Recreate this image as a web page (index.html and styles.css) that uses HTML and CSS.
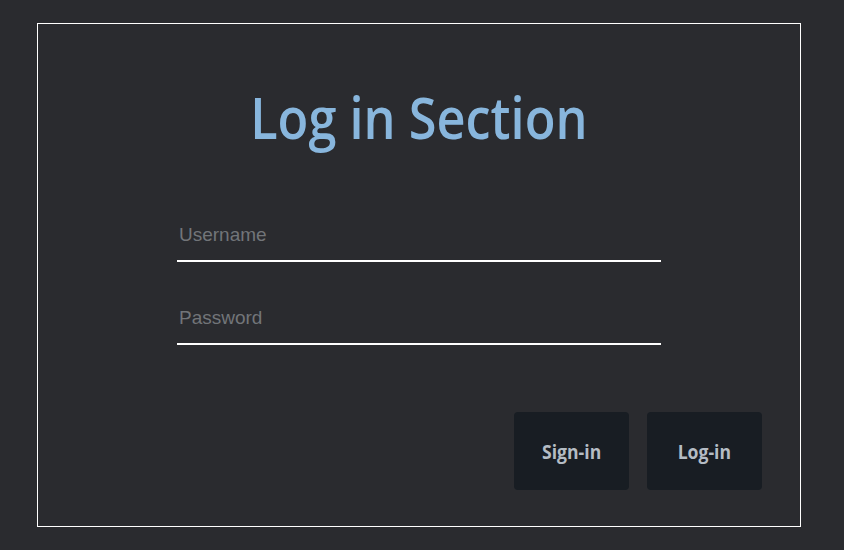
FILE: index.html
```html
<!DOCTYPE html>
<html>
<head>
<meta charset="utf-8">
<link rel="stylesheet" href="styles.css">
</head>
<body>
<div class="panel">
  <h1 class="title">Log in Section</h1>
  <form class="form">
    <div class="field"><input class="input" type="text" placeholder="Username"></div>
    <div class="field"><input class="input" type="password" placeholder="Password"></div>
    <div class="actions">
      <button type="button" class="btn"><span class="btn-label">Sign-in</span></button>
      <button type="button" class="btn"><span class="btn-label">Log-in</span></button>
    </div>
  </form>
</div>
</body>
</html>
```
FILE: styles.css
```css
html, body {
  margin: 0;
  padding: 0;
  background: #2a2b2f;
}
body {
  padding: 23px 0 0 37px;
  width: 844px;
  height: 550px;
  box-sizing: border-box;
}
.panel {
  width: 764px;
  height: 504px;
  box-sizing: border-box;
  border: 1px solid #ffffff;
  display: flex;
  flex-direction: column;
  align-items: center;
}
.title {
  margin: 53px 0 0 0;
  font-family: "Open Sans", sans-serif;
  font-weight: 600;
  font-size: 58px;
  line-height: 80px;
  color: #88b6dd;
  transform: scaleX(0.87);
  white-space: nowrap;
}
.form {
  width: 100%;
  display: flex;
  flex-direction: column;
  align-items: center;
  margin-top: 67px;
}
.field {
  width: 484px;
  margin-bottom: 45px;
}
.input {
  display: block;
  width: 100%;
  box-sizing: border-box;
  background: transparent;
  border: none;
  border-bottom: 2px solid #ffffff;
  padding: 0 2px 14px;
  font-family: "Liberation Sans", Arial, sans-serif;
  font-size: 19px;
  color: #cccccc;
  outline: none;
}
.input::placeholder {
  color: #727579;
}
.actions {
  align-self: stretch;
  display: flex;
  justify-content: flex-end;
  gap: 18px;
  padding-right: 38px;
  margin-top: 22px;
}
.btn {
  width: 115px;
  height: 78px;
  border: none;
  border-radius: 4px;
  background: #181d23;
  color: #b4bcc4;
  font-family: "Open Sans", sans-serif;
  font-weight: 700;
  font-size: 20px;
  padding: 0;
}
.btn-label {
  display: inline-block;
  transform: scaleX(0.88);
}
```
